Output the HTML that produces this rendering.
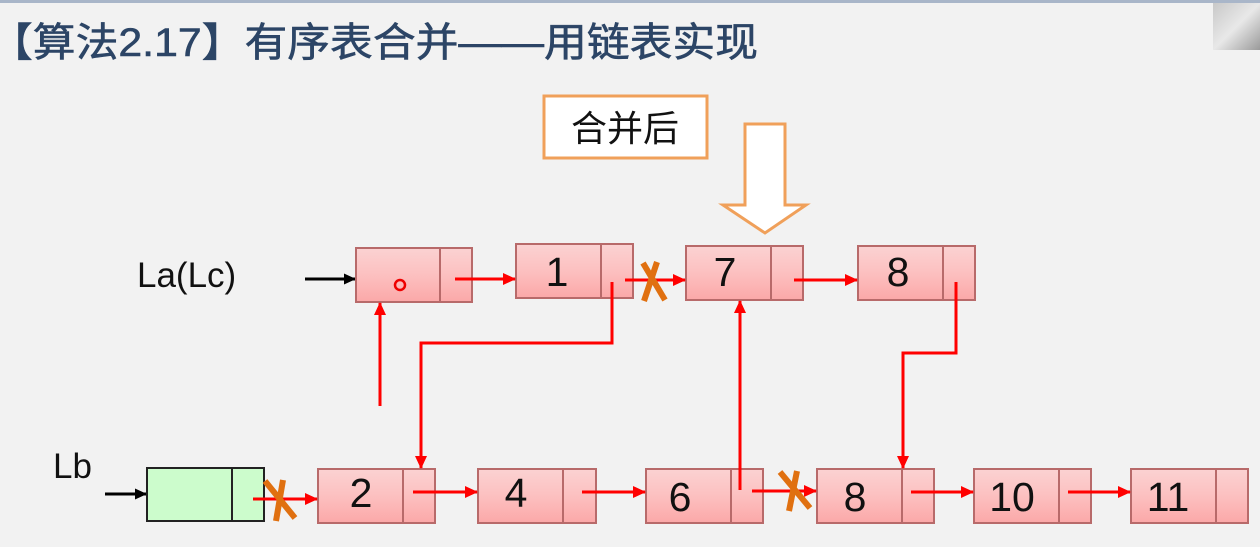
<!DOCTYPE html>
<html><head><meta charset="utf-8"><style>
html,body{margin:0;padding:0;background:#f2f2f2;}
svg{display:block;}
</style></head><body>
<svg width="1260" height="547" viewBox="0 0 1260 547" xmlns="http://www.w3.org/2000/svg">
<defs>
<linearGradient id="rg" x1="0" y1="0" x2="0" y2="1">
<stop offset="0" stop-color="#fbd2d2"/><stop offset="0.5" stop-color="#fcc0c0"/><stop offset="1" stop-color="#fba8a8"/>
</linearGradient>
<linearGradient id="cg" x1="0" y1="0" x2="1" y2="1">
<stop offset="0" stop-color="#c8c8c8"/><stop offset="0.5" stop-color="#e8e8e8"/><stop offset="1" stop-color="#9a9a9a"/>
</linearGradient>
<marker id="ar" markerWidth="13" markerHeight="12" refX="12" refY="6" orient="auto" markerUnits="userSpaceOnUse" viewBox="0 0 13 12">
<path d="M0,0 L13,6 L0,12 z" fill="#f00"/></marker>
<marker id="ab" markerWidth="12" markerHeight="11" refX="11" refY="5.5" orient="auto" markerUnits="userSpaceOnUse" viewBox="0 0 12 11">
<path d="M0,0 L12,5.5 L0,11 z" fill="#000"/></marker>
</defs>
<rect x="0" y="0" width="1260" height="3" fill="#a9b6c9"/>
<rect x="1213" y="3" width="47" height="47" fill="url(#cg)"/>
<text x="-10" y="56" font-family="Liberation Sans, Noto Sans CJK SC, sans-serif" font-size="40" fill="#2c4566" stroke="#2c4566" stroke-width="0.6" textLength="768" lengthAdjust="spacingAndGlyphs">【算法2.17】有序表合并——用链表实现</text>

<rect x="544" y="96" width="163" height="62" fill="#fff" stroke="#f0a05a" stroke-width="3"/>
<text x="625" y="141" text-anchor="middle" font-family="Liberation Sans, Noto Sans CJK SC, sans-serif" font-size="36" fill="#111">合并后</text>
<path d="M745,124 H785 V205 H806 L765,233 L723,205 H745 Z" fill="#fff" stroke="#f0a05a" stroke-width="3"/>

<g font-family="Liberation Sans, sans-serif" font-size="35" fill="#111">
<text x="137" y="287">La(Lc)</text>
<text x="53" y="478">Lb</text>
</g>
<line x1="305" y1="279" x2="355" y2="279" stroke="#000" stroke-width="3" marker-end="url(#ab)"/>
<line x1="105" y1="494" x2="146" y2="494" stroke="#000" stroke-width="3" marker-end="url(#ab)"/>

<g stroke="#b86a6a" stroke-width="2" fill="url(#rg)">
<rect x="356" y="248" width="116" height="54"/><line x1="440" y1="248" x2="440" y2="302"/>
<rect x="516" y="244" width="117" height="54"/><line x1="601" y1="244" x2="601" y2="298"/>
<rect x="686" y="246" width="117" height="54"/><line x1="771" y1="246" x2="771" y2="300"/>
<rect x="858" y="246" width="117" height="54"/><line x1="943" y1="246" x2="943" y2="300"/>
<rect x="318" y="469" width="117" height="54"/><line x1="403" y1="469" x2="403" y2="523"/>
<rect x="478" y="469" width="118" height="54"/><line x1="563" y1="469" x2="563" y2="523"/>
<rect x="646" y="469" width="117" height="54"/><line x1="731" y1="469" x2="731" y2="523"/>
<rect x="817" y="469" width="117" height="54"/><line x1="902" y1="469" x2="902" y2="523"/>
<rect x="974" y="469" width="117" height="54"/><line x1="1059" y1="469" x2="1059" y2="523"/>
<rect x="1131" y="469" width="117" height="54"/><line x1="1216" y1="469" x2="1216" y2="523"/>
</g>
<g stroke="#222" stroke-width="2" fill="#ccfccc">
<rect x="147" y="468" width="117" height="53"/><line x1="232" y1="468" x2="232" y2="521"/>
</g>
<circle cx="400" cy="285" r="5" fill="none" stroke="#e00" stroke-width="2.5"/>
<g font-family="Liberation Sans, sans-serif" font-size="41" fill="#111" text-anchor="middle">
<text x="557" y="286">1</text><text x="725" y="286">7</text><text x="898" y="286">8</text>
<text x="361" y="507">2</text><text x="516" y="507">4</text><text x="680" y="511">6</text>
<text x="855" y="511">8</text><text x="1012" y="511">10</text><text x="1168" y="511">11</text>
</g>

<g stroke="#f00" stroke-width="3" fill="none" marker-end="url(#ar)">
<line x1="455" y1="279" x2="515" y2="279"/>
<line x1="625" y1="280" x2="685" y2="280"/>
<line x1="794" y1="280" x2="857" y2="280"/>
<polyline points="612,282 612,343 421,343 421,468"/>
<line x1="380" y1="406" x2="380" y2="303"/>
<line x1="740" y1="490" x2="740" y2="301"/>
<polyline points="956,282 956,353 903,353 903,468"/>
<line x1="253" y1="499" x2="317" y2="499"/>
<line x1="413" y1="492" x2="477" y2="492"/>
<line x1="582" y1="492" x2="645" y2="492"/>
<line x1="752" y1="491" x2="816" y2="491"/>
<line x1="911" y1="492" x2="973" y2="492"/>
<line x1="1068" y1="492" x2="1130" y2="492"/>
</g>
<g stroke="#e07010" stroke-width="6" stroke-linecap="butt">
<line x1="643" y1="263" x2="665" y2="300"/><line x1="657" y1="262" x2="644" y2="301"/>
<line x1="265" y1="481" x2="295" y2="518"/><line x1="283" y1="480" x2="276" y2="521"/>
<line x1="780" y1="472" x2="810" y2="508"/><line x1="797" y1="471" x2="789" y2="511"/>
</g>
</svg>
</body></html>
